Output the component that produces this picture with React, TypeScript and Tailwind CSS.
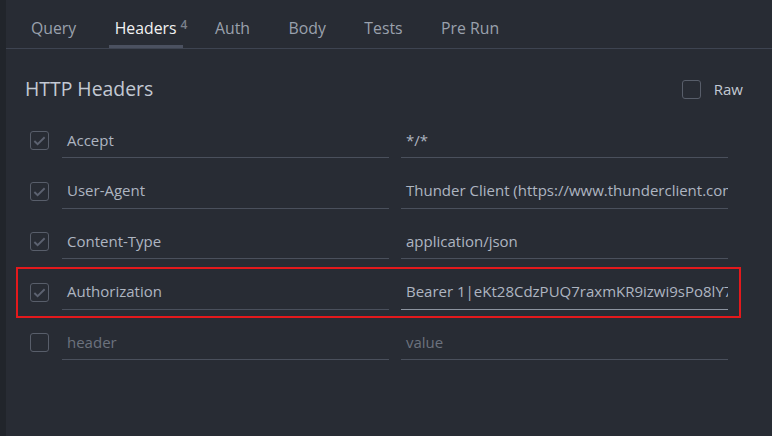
import { Fragment } from 'react';

const tabs = ['Query', 'Headers', 'Auth', 'Body', 'Tests', 'Pre Run'];

const rows = [
  { key: 'Accept', value: '*/*', checked: true },
  { key: 'User-Agent', value: 'Thunder Client (https://www.thunderclient.com)', checked: true },
  { key: 'Content-Type', value: 'application/json', checked: true },
  { key: 'Authorization', value: 'Bearer 1|eKt28CdzPUQ7raxmKR9izwi9sPo8lY7mXo2bQ', checked: true, focused: true },
  { key: '', value: '', checked: false },
];

function Checkbox({ checked }: { checked: boolean }) {
  return (
    <div className="flex h-[19px] w-[19px] shrink-0 items-center justify-center rounded-[3px] border border-[#585e6a]">
      {checked && (
        <svg width="15" height="15" viewBox="0 0 16 16" fill="none">
          <path d="M2.5 8.5 L6 12 L13.5 4.5" stroke="#5c6270" strokeWidth="2" />
        </svg>
      )}
    </div>
  );
}

function Field({ text, placeholder, focused }: { text: string; placeholder: string; focused?: boolean }) {
  return (
    <div
      className={`flex h-[35px] w-[327px] shrink-0 items-center overflow-hidden whitespace-nowrap border-b px-[5px] ${
        focused ? 'border-[#8c939f]' : 'border-[#4a505c]'
      }`}
    >
      {text ? (
        <span className="text-[#aeb5c1]">{text}</span>
      ) : (
        <span className="text-[#6c727e]">{placeholder}</span>
      )}
    </div>
  );
}

export default function App() {
  return (
    <div
      className="flex h-[436px] w-[772px] overflow-hidden bg-[#282c34] text-[15px]"
      style={{ fontFamily: '"Open Sans", "Noto Sans", sans-serif' }}
    >
      <div className="w-[6px] shrink-0 bg-[#21252b]" />
      <div className="flex-1">
        {/* Tabs */}
        <div className="flex h-[49px] gap-[26.5px] border-b border-[#3e4451] pl-[19px] text-[15.8px]">
          {tabs.map((t) => (
            <div
              key={t}
              className={`relative flex h-full items-center border-b-[3px] px-[6px] pt-[12px] ${
                t === 'Headers' ? 'border-[#4b5160] text-[#f2f2f2]' : 'border-transparent text-[#9aa1ad]'
              }`}
            >
              {t}
              {t === 'Headers' && (
                <span className="absolute left-[calc(100%-2px)] top-[16px] text-[12px] font-semibold text-[#7b818c]">4</span>
              )}
            </div>
          ))}
        </div>

        <div className="pl-[19px]">
          {/* Title */}
          <div className="mt-[26px] flex h-[28px] items-center">
            <span className="text-[19.4px] text-[#c3c9d3]">HTTP Headers</span>
            <div className="ml-auto mr-[29px] flex items-center gap-[13px]">
              <Checkbox checked={false} />
              <span className="text-[#c3c9d3]">Raw</span>
            </div>
          </div>

          {/* Header rows */}
          <div className="mt-[20px] flex flex-col gap-[15.5px]">
            {rows.map((r, i) => (
              <Fragment key={i}>
                <div className="relative flex items-center">
                  <div className="ml-[5px] mr-[13px]">
                    <Checkbox checked={r.checked} />
                  </div>
                  <Field text={r.key} placeholder="header" />
                  <div className="w-[12px] shrink-0" />
                  <Field text={r.value} placeholder="value" focused={r.focused} />
                  {r.focused && (
                    <div className="pointer-events-none absolute -bottom-[8px] -top-[8px] left-[-9px] w-[725px] border-2 border-[#e3191c]" />
                  )}
                </div>
              </Fragment>
            ))}
          </div>
        </div>
      </div>
    </div>
  );
}
